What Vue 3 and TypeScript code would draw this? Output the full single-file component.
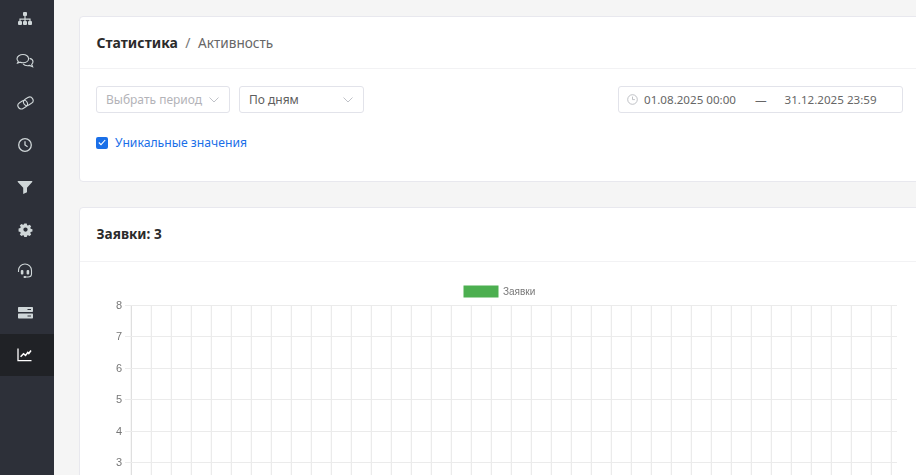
<script setup lang="ts">
// Статистика: боковое меню, фильтры и график заявок
const verticals = Array.from({ length: 39 }, (_, i) => 131.3 + i * 20)
const horizontals = [8, 7, 6, 5, 4, 3].map((value, i) => ({
  value,
  y: Math.round(305 + i * 31.4) + 0.5,
}))
</script>

<template>
  <div class="page">
    <aside class="sidebar">
      <a class="nav-item">
        <svg width="16" height="16" viewBox="0 0 16 16" fill="currentColor">
          <rect x="6" y="1" width="4" height="4" rx="1" />
          <path d="M7.400 4.500h1.200v3h5v2.500h-1.200V8.700H8.600V10H7.400V8.700H3.600V10H2.400V7.500h5z" />
          <rect x="1" y="10" width="4" height="4" rx="1" />
          <rect x="6" y="10" width="4" height="4" rx="1" />
          <rect x="11" y="10" width="4" height="4" rx="1" />
        </svg>
      </a>
      <a class="nav-item">
        <svg width="18" height="16" viewBox="0 0 18 16" fill="none" stroke="currentColor" stroke-width="1.100">
          <path d="M7 1.500C3.800 1.500 1 3.300 1 5.700c0 1 .5 1.900 1.300 2.600l-.8 1.800 2.700-.9c.9.300 1.800.5 2.800.5 3.200 0 5.600-1.800 5.600-4S10.200 1.500 7 1.500z" />
          <path d="M13.600 5.400c2 .5 3.400 1.800 3.400 3.400 0 1-.5 1.800-1.300 2.500l.9 2.400-3-1.300c-.7.200-1.400.3-2.100.3-1.900 0-3.500-.7-4.400-1.900" />
        </svg>
      </a>
      <a class="nav-item">
        <svg width="17" height="16" viewBox="0 0 17 16" fill="none" stroke="currentColor" stroke-width="1.100">
          <rect x=".700" y="6.300" width="10" height="6.800" rx="3.400" transform="rotate(-32 5.700 9.700)" />
          <rect x="6.300" y="2.900" width="10" height="6.800" rx="3.400" transform="rotate(-32 11.300 6.300)" />
        </svg>
      </a>
      <a class="nav-item">
        <svg width="16" height="16" viewBox="0 0 16 16" fill="none" stroke="currentColor" stroke-width="1.300">
          <circle cx="8" cy="8" r="6.300" />
          <path d="M8 4.200V8l2.600 1.700" />
        </svg>
      </a>
      <a class="nav-item">
        <svg width="16" height="16" viewBox="0 0 16 16" fill="currentColor">
          <path d="M1.200 2h13.600c.5 0 .7.500.4.900L10 8.800v4.400L6.200 15V8.800L.8 2.900c-.3-.4-.1-.9.400-.9z" />
        </svg>
      </a>
      <a class="nav-item">
        <svg width="15" height="15" viewBox="0 0 16 16" fill="currentColor" fill-rule="evenodd">
          <path d="M6.700 1.500h2.600l.4 1.900 1 .4 1.600-1 1.800 1.800-1 1.600.4 1 1.900.4v2.600l-1.900.4-.4 1 1 1.600-1.800 1.800-1.600-1-1 .4-.4 1.900H6.700l-.4-1.900-1-.4-1.600 1-1.800-1.800 1-1.600-.4-1-1.900-.4V6.800l1.900-.4.4-1-1-1.600 1.800-1.800 1.600 1 1-.4zM8 5.800a2.300 2.300 0 1 0 0 4.600 2.300 2.300 0 0 0 0-4.600z" />
        </svg>
      </a>
      <a class="nav-item">
        <svg width="16" height="16" viewBox="0 0 16 16" fill="none" stroke="currentColor" stroke-width="1.100">
          <path d="M1.500 9V7.500a6.500 6.500 0 0 1 13 0V11c0 2-1.500 3-3.500 3H8.500" />
          <rect x="3.800" y="7" width="2.600" height="4.600" rx="1" fill="currentColor" stroke="none" />
          <rect x="9.600" y="7" width="2.600" height="4.600" rx="1" fill="currentColor" stroke="none" />
          <rect x="6.500" y="13" width="2.600" height="2" rx="1" fill="currentColor" stroke="none" />
        </svg>
      </a>
      <a class="nav-item">
        <svg width="15" height="14" viewBox="0 0 15 14" fill="currentColor" fill-rule="evenodd">
          <path d="M1 1h13c.6 0 1 .4 1 1v3c0 .6-.4 1-1 1H1c-.6 0-1-.4-1-1V2c0-.6.400-1 1-1zm8.500 2v.9H13V3zM1 7.500h13c.6 0 1 .4 1 1v3c0 .6-.4 1-1 1H1c-.6 0-1-.4-1-1v-3c0-.6.400-1 1-1zm8.500 2v.9H13v-.9z" />
        </svg>
      </a>
      <a class="nav-item active">
        <svg width="16" height="16" viewBox="0 0 16 16" fill="none" stroke="currentColor">
          <path d="M1 1.500v12.200h13.500" stroke-width="1.300" />
          <path d="M3.600 9.800 6.500 6.700l2 1.700 2.300-2.900 1 1L14 3.500" stroke-width="1.500" />
        </svg>
      </a>
    </aside>

    <main class="content">
      <section class="card filters-card">
        <header class="card-header">
          <span class="crumb-main">Статистика</span>
          <span class="crumb-sep">/</span>
          <span class="crumb-sub">Активность</span>
        </header>
        <div class="filters">
          <div class="filter-row">
            <div class="select period">
              <span class="placeholder">Выбрать период</span>
              <svg class="chevron" width="10" height="6" viewBox="0 0 10 6" fill="none" stroke="currentColor"><path d="M.5.500 5 5 9.500.500" /></svg>
            </div>
            <div class="select group">
              <span>По дням</span>
              <svg class="chevron" width="10" height="6" viewBox="0 0 10 6" fill="none" stroke="currentColor"><path d="M.5.500 5 5 9.500.500" /></svg>
            </div>
            <div class="date-range">
              <svg class="clock" width="11" height="11" viewBox="0 0 11 11" fill="none" stroke="currentColor" stroke-width=".8">
                <circle cx="5.500" cy="5.500" r="4.800" />
                <path d="M5.500 2.600v3h2.400" />
              </svg>
              <span class="date-from">01.08.2025 00:00</span>
              <span class="date-dash">—</span>
              <span class="date-to">31.12.2025 23:59</span>
            </div>
          </div>
          <label class="unique">
            <span class="checkbox">
              <svg width="8" height="7" viewBox="0 0 8 7" fill="none" stroke="#fff" stroke-width="1.100"><path d="M.8 3.500 3 5.600 7.200 1" /></svg>
            </span>
            Уникальные значения
          </label>
        </div>
      </section>

      <section class="card chart-card">
        <header class="card-header chart-header">Заявки: 3</header>
        <div class="chart">
          <svg width="836" height="213" viewBox="80 262 836 213">
            <rect x="463.500" y="285.500" width="35" height="12" fill="#4caf50" />
            <text x="503" y="294.500" class="legend">Заявки</text>
            <line
              v-for="(x, i) in verticals"
              :key="x"
              :x1="x"
              :x2="x"
              y1="305"
              y2="475"
              stroke="#000"
              :stroke-opacity="i === 0 ? 0.16 : 0.1"
            />
            <g v-for="line in horizontals" :key="line.value">
              <line x1="125" x2="897" :y1="line.y" :y2="line.y" stroke="#ebebeb" />
              <text x="122" :y="line.y + 3" text-anchor="end" class="tick">{{ line.value }}</text>
            </g>
          </svg>
        </div>
      </section>
    </main>
  </div>
</template>

<style>
html,
body {
  margin: 0;
  overflow: hidden;
}
</style>

<style scoped>
.page {
  display: flex;
  height: 100vh;
  overflow: hidden;
  font-family: "Noto Sans", "Open Sans", sans-serif;
  font-size: 12px;
  color: #5e5e5e;
  background: #f5f5f5;
}

/* Боковое меню */
.sidebar {
  flex: 0 0 54px;
  display: flex;
  flex-direction: column;
  background: #2d3039;
}

.nav-item {
  flex: 0 0 42px;
  display: flex;
  align-items: center;
  justify-content: center;
  padding-right: 4px;
  color: #cfd6d8;
}

.nav-item:first-child {
  margin-top: -2px;
}

.nav-item.active {
  color: #fff;
  background: #202226;
}

.content {
  flex: 1;
  min-width: 0;
  padding: 16px 0 0 25px;
  overflow: hidden;
}

.card {
  box-sizing: border-box;
  width: 860px;
  background: #fff;
  border: 1px solid #e8e8ee;
  border-radius: 4px;
}

.filters-card {
  height: 166px;
  margin-bottom: 25px;
}

.card-header {
  box-sizing: border-box;
  display: flex;
  align-items: center;
  height: 52px;
  padding: 0 17px 0 16.500px;
  border-bottom: 1px solid #f2f2f4;
}

.crumb-main {
  font-size: 14px;
  font-weight: 700;
  color: #2b2b2b;
}

.crumb-sep {
  margin: 0 7.500px;
  font-size: 14px;
  color: #777;
}

.crumb-sub {
  font-size: 13.600px;
  color: #666;
}

.filters {
  padding: 17px 16px 0;
}

.filter-row {
  display: flex;
  gap: 9px;
}

.select,
.date-range {
  box-sizing: border-box;
  display: flex;
  align-items: center;
  height: 27px;
  background: #fff;
  border: 1px solid #e2e3ea;
  border-radius: 3px;
}

.select {
  justify-content: space-between;
  padding: 0 10px 0 9px;
}

.period {
  width: 134px;
}

.group {
  width: 125px;
}

.placeholder {
  color: #b3b3b8;
}

.chevron {
  color: #c0c2c8;
}

.date-range {
  width: 285px;
  margin-left: 245px;
  padding-left: 8px;
  font-size: 11.600px;
  color: #666;
}

.clock {
  margin-right: 6px;
  color: #b0b2b8;
}

.date-from {
  width: 93px;
}

.date-dash {
  margin: 0 18px;
}

.unique {
  display: flex;
  align-items: center;
  gap: 7px;
  margin-top: 21px;
  font-size: 12.200px;
  color: #1a6fe8;
}

.checkbox {
  display: flex;
  align-items: center;
  justify-content: center;
  width: 12px;
  height: 12px;
  background: #1a6fe8;
  border-radius: 2px;
}

.chart-card {
  height: 300px;
}

.chart-header {
  height: 54px;
  padding-bottom: 2px;
  font-size: 13.600px;
  font-weight: 700;
  color: #2b2b2b;
}

.chart svg {
  display: block;
  will-change: transform;
}

.legend {
  font-family: "Liberation Sans", Arial, sans-serif;
  font-size: 10px;
  fill: #777;
}

.tick {
  font-family: "Liberation Sans", Arial, sans-serif;
  font-size: 11px;
  fill: #777;
}
</style>
